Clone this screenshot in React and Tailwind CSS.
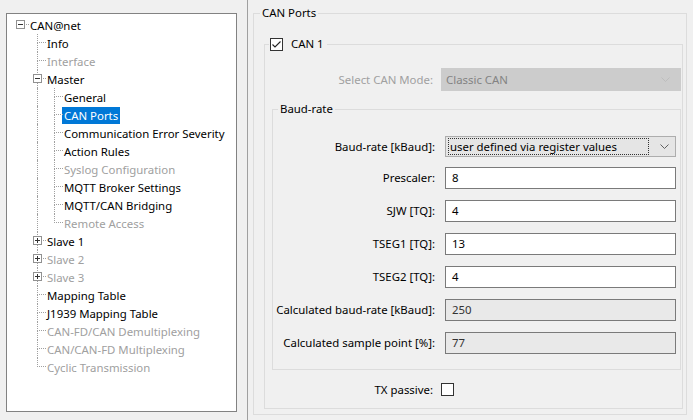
import React from "react";

// flattened tree rows: level, expander ("minus" | "plus" | null), last sibling, grey (disabled)
const treeRows = [
  { label: "CAN@net", level: 0, expander: "minus", last: true, cont: [] },
  { label: "Info", level: 1, cont: [false] },
  { label: "Interface", level: 1, grey: true, cont: [false] },
  { label: "Master", level: 1, expander: "minus", cont: [false] },
  { label: "General", level: 2, cont: [false, true] },
  { label: "CAN Ports", level: 2, selected: true, cont: [false, true] },
  { label: "Communication Error Severity", level: 2, cont: [false, true] },
  { label: "Action Rules", level: 2, cont: [false, true] },
  { label: "Syslog Configuration", level: 2, grey: true, cont: [false, true] },
  { label: "MQTT Broker Settings", level: 2, cont: [false, true] },
  { label: "MQTT/CAN Bridging", level: 2, cont: [false, true] },
  { label: "Remote Access", level: 2, grey: true, last: true, cont: [false, true] },
  { label: "Slave 1", level: 1, expander: "plus", cont: [false] },
  { label: "Slave 2", level: 1, expander: "plus", grey: true, cont: [false] },
  { label: "Slave 3", level: 1, expander: "plus", grey: true, cont: [false] },
  { label: "Mapping Table", level: 1, cont: [false] },
  { label: "J1939 Mapping Table", level: 1, cont: [false] },
  { label: "CAN-FD/CAN Demultiplexing", level: 1, grey: true, cont: [false] },
  { label: "CAN/CAN-FD Multiplexing", level: 1, grey: true, cont: [false] },
  { label: "Cyclic Transmission", level: 1, grey: true, last: true, cont: [false] },
];

const Expander = ({ type }) => (
  <div className="absolute left-[4px] top-[4px] w-[9px] h-[9px] bg-white border border-[#919191] flex items-center justify-center">
    <div className="relative w-[5px] h-[5px] flex items-center justify-center">
      <div className="w-[5px] h-[1px] bg-[#333]" />
      {type === "plus" && <div className="absolute left-[2px] top-0 w-[1px] h-[5px] bg-[#333]" />}
    </div>
  </div>
);

const TreeRow = ({ row }) => {
  const isRoot = row.level === 0;
  return (
    <div className="flex h-[18px] items-center">
      {row.cont.map((c, i) => (
        <div key={i} className="w-[17px] h-full shrink-0">
          {c && <div className="ml-[8px] h-full border-l border-dotted border-[#a0a0a0]" />}
        </div>
      ))}
      <div className="relative w-[17px] h-full shrink-0 flex flex-col">
        <div
          className={
            "ml-[8px] w-[9px] h-[9px] border-b border-dotted border-[#a0a0a0] " +
            (isRoot ? "" : "border-l")
          }
        />
        <div
          className={
            "ml-[8px] h-[9px] border-dotted border-[#a0a0a0] " + (row.last || isRoot ? "" : "border-l")
          }
        />
        {row.expander && <Expander type={row.expander} />}
      </div>
      <span
        className={
          "-ml-[1px] px-[2px] h-[17px] leading-[17px] whitespace-nowrap " +
          (row.selected ? "bg-[#0078d7] text-white" : row.grey ? "text-[#a0a0a0]" : "text-black")
        }
      >
        {row.label}
      </span>
    </div>
  );
};

const Chevron = ({ color }) => (
  <svg width="9" height="5" viewBox="0 0 9 5" className="shrink-0">
    <polyline points="0.5,0.5 4.5,4.5 8.5,0.5" fill="none" stroke={color} strokeWidth="1" />
  </svg>
);

const CheckBox = ({ checked }) => (
  <div className="w-[13px] h-[13px] shrink-0 bg-white border border-[#333333] flex items-center justify-center">
    {checked && (
      <svg width="11" height="11" viewBox="0 0 11 11">
        <polyline points="1.5,5.5 4,8 9.5,2.5" fill="none" stroke="#222" strokeWidth="1.1" />
      </svg>
    )}
  </div>
);

const FieldRow = ({ label, value, readOnly }) => (
  <div className="flex items-center h-[22px]">
    <div className="w-[163px] text-right pr-[1px] whitespace-nowrap">{label}</div>
    <div
      className={
        "ml-[9px] w-[231px] h-[22px] border border-[#7a7a7a] px-[6px] leading-[20px] " +
        (readOnly ? "bg-[#e9e9e9] text-[#333]" : "bg-white")
      }
    >
      {value}
    </div>
  </div>
);

export default function App() {
  return (
    <div className="w-[693px] h-[420px] bg-[#f0f0f0] flex font-['Noto_Sans',sans-serif] text-[11.4px] text-black overflow-hidden">
      {/* left: navigation tree */}
      <div className="w-[247px] shrink-0 h-full pt-[13px] pl-[6px]">
        <div className="w-[231px] h-[399px] bg-white border border-[#828282] pt-[2px] pl-[5px]">
          {treeRows.map((row) => (
            <TreeRow key={row.label} row={row} />
          ))}
        </div>
      </div>

      {/* right: settings panel */}
      <div className="flex-1 h-full border-l border-[#a0a0a0] pl-[5px] pr-[6px] pt-[5px]">
        <fieldset className="h-[410px] border border-[#dcdcdc] px-0 pb-[4px]">
          <legend className="ml-[6px] px-[2px] leading-[16px] h-[16px]">CAN Ports</legend>
          <div className="pl-[10px] pr-[3px] pt-[15px]">
            <fieldset className="border border-[#dcdcdc] pb-[12px]">
              <legend className="ml-[4px] px-[1px] h-[16px] flex items-center gap-[8px] pr-[3px]">
                <CheckBox checked />
                <span>CAN 1</span>
              </legend>

              <div className="flex items-center h-[23px] mt-[16px]">
                <div className="w-[168px] text-right text-[#a0a0a0] whitespace-nowrap">Select CAN Mode:</div>
                <div className="ml-[8px] flex-1 mr-[1px] h-[23px] bg-[#cccccc] flex items-center pl-[5px] pr-[11px] justify-between text-[#838383]">
                  <span>Classic CAN</span>
                  <Chevron color="#bdbdbd" />
                </div>
              </div>

              <fieldset className="ml-[7px] mr-[1px] mt-[10px] border border-[#dcdcdc] pb-[15px]">
                <legend className="ml-[5px] px-[2px] leading-[16px] h-[16px]">Baud-rate</legend>
                <div className="flex items-center h-[21px] mt-[19px]">
                  <div className="w-[163px] text-right pr-[1px] whitespace-nowrap">Baud-rate [kBaud]:</div>
                  <div className="ml-[9px] w-[231px] h-[21px] bg-[#e5e5e5] border border-[#adadad] flex items-center pl-[2px] pr-[6px]">
                    <div className="flex-1 h-[17px] border border-dotted border-[#333] px-[1px] leading-[15px] whitespace-nowrap">
                      user defined via register values
                    </div>
                    <div className="w-[20px] flex justify-end">
                      <Chevron color="#606060" />
                    </div>
                  </div>
                </div>
                <div className="flex flex-col gap-[11px] mt-[10px]">
                  <FieldRow label="Prescaler:" value="8" />
                  <FieldRow label="SJW [TQ]:" value="4" />
                  <FieldRow label="TSEG1 [TQ]:" value="13" />
                  <FieldRow label="TSEG2 [TQ]:" value="4" />
                  <FieldRow label="Calculated baud-rate [kBaud]:" value="250" readOnly />
                  <FieldRow label="Calculated sample point [%]:" value="77" readOnly />
                </div>
              </fieldset>

              <div className="flex items-center h-[13px] mt-[13px]">
                <div className="w-[168px] text-right whitespace-nowrap">TX passive:</div>
                <div className="ml-[8px]">
                  <CheckBox />
                </div>
              </div>
            </fieldset>
          </div>
        </fieldset>
      </div>
    </div>
  );
}
